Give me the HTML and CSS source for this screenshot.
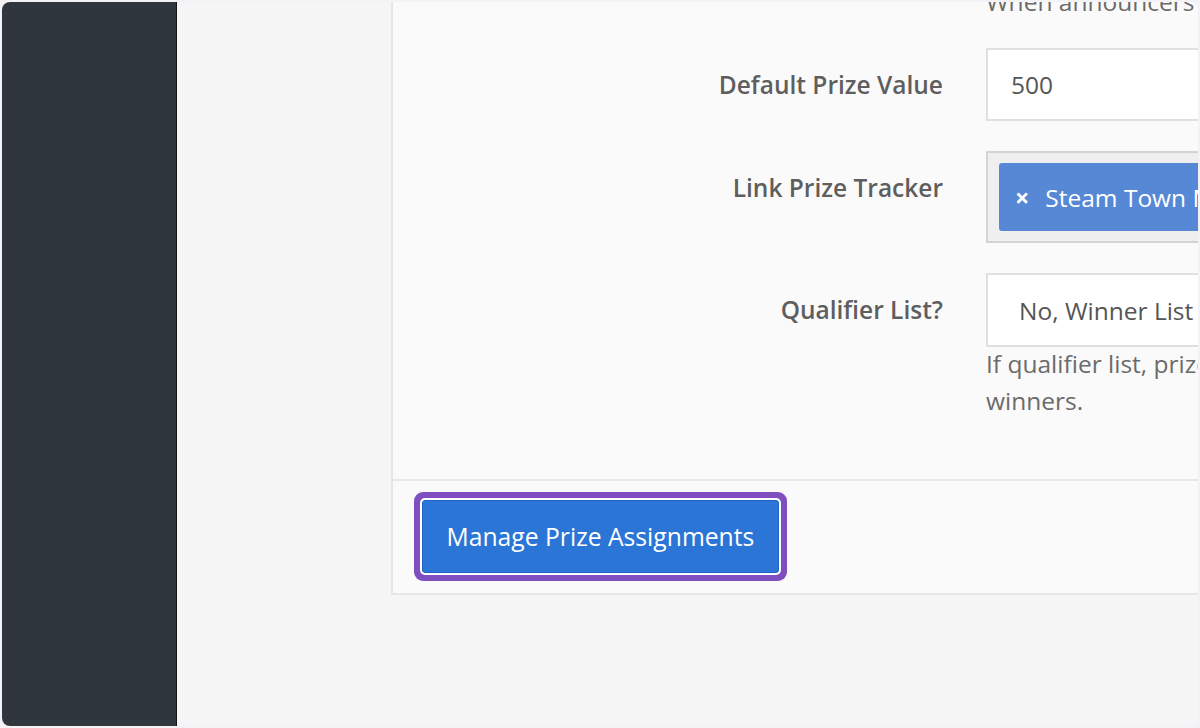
FILE: index.html
```html
<!DOCTYPE html>
<html lang="en">
<head>
<meta charset="utf-8">
<title>Prize settings</title>
<link rel="stylesheet" href="styles.css">
</head>
<body>
<div class="frame">
  <aside class="sidebar"></aside>
  <main class="main">
    <section class="panel">
      <div class="panel-body">
        <div class="form-row">
          <div class="label-cell"></div>
          <div class="help help-top">When announcers pick winners.</div>
        </div>
        <div class="form-row row-first">
          <label class="label">Default Prize Value</label>
          <div class="control">
            <div class="input">500</div>
          </div>
        </div>
        <div class="form-row row-next">
          <label class="label">Link Prize Tracker</label>
          <div class="control">
            <div class="multi">
              <span class="chip"><span class="chip-x">×</span><span class="chip-text">Steam Town Mall Prize Tracker</span></span>
            </div>
          </div>
        </div>
        <div class="form-row row-next">
          <label class="label">Qualifier List?</label>
          <div class="control">
            <div class="input select">No, Winner List</div>
            <div class="help help-bottom">If qualifier list, prizes are not assigned to<br>winners.</div>
          </div>
        </div>
      </div>
      <div class="panel-footer">
        <button class="btn" type="button">Manage Prize Assignments</button>
      </div>
    </section>
  </main>
</div>
</body>
</html>
```

FILE: styles.css
```css
html, body {
  margin: 0;
  padding: 0;
}

body {
  background: #f3f2f7;
  font-family: "Open Sans", "Liberation Sans", sans-serif;
  font-size: 24.5px;
  line-height: 37px;
}

.frame {
  margin: 2px;
  height: 724px;
  border-radius: 8px;
  overflow: hidden;
  display: flex;
  background: #f5f5f5;
}

.sidebar {
  width: 174px;
  flex-shrink: 0;
  background: #2f363e;
  border-right: 1px solid #111418;
}

.main {
  flex: 1;
  display: flex;
  align-items: flex-start;
  overflow: hidden;
  padding-left: 214px;
}

.panel {
  width: 1100px;
  flex-shrink: 0;
  margin-top: -19px;
  background: #fafafa;
  border: 2px solid #e6e6e6;
  border-top: none;
}

.panel-body {
  padding: 0 0 60px 0;
}

.form-row {
  display: grid;
  grid-template-columns: 550px 1fr;
  column-gap: 43px;
}

.row-first {
  margin-top: 28px;
}

.row-next {
  margin-top: 30px;
}

.label {
  display: block;
  text-align: right;
  font-weight: 600;
  color: #5e5e5e;
  padding-top: 18px;
}

.help {
  color: #6b6b6b;
  white-space: nowrap;
}

.help-bottom {
  margin-top: -2px;
}

.input {
  box-sizing: border-box;
  height: 73px;
  display: flex;
  align-items: center;
  padding: 0 23px;
  background: #ffffff;
  border: 2px solid #e0e0e0;
  color: #555555;
  white-space: nowrap;
}

.select {
  height: 74px;
  padding-left: 31px;
}

.multi {
  box-sizing: border-box;
  height: 92px;
  padding: 10px 11px;
  background: #efefef;
  border: 2px solid #d3d3d3;
}

.chip {
  box-sizing: border-box;
  height: 68px;
  display: flex;
  align-items: center;
  gap: 16px;
  padding: 0 16px;
  background: #5688d6;
  border-radius: 3px;
  color: #ffffff;
  white-space: nowrap;
}

.chip-x {
  font-weight: 700;
  font-size: 25px;
}

.chip-text {
  line-height: 37px;
}

.panel-footer {
  border-top: 2px solid #e7e7e7;
  padding: 18.5px 28px 20px 28.5px;
}

.btn {
  display: block;
  box-sizing: border-box;
  height: 73.5px;
  padding: 0 24px;
  margin: 0;
  background: #2a75d6;
  border: 1px solid #1b63c7;
  border-radius: 3px;
  color: #ffffff;
  font-family: "Open Sans", "Liberation Sans", sans-serif;
  font-size: 24.7px;
  line-height: 37px;
  box-shadow: 0 0 0 2px #ffffff, 0 0 0 8px #7f4fc2;
}
```
